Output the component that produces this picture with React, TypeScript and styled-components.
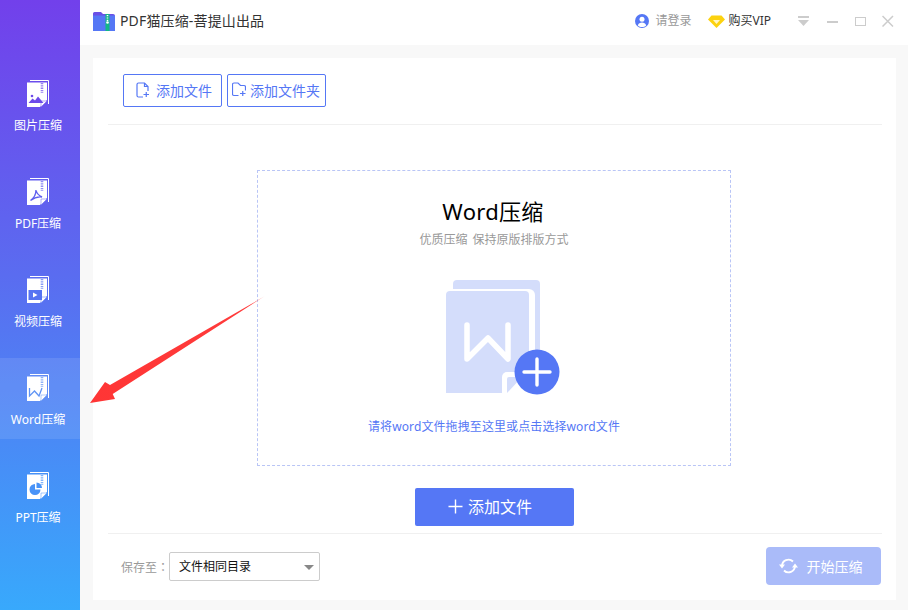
import React from "react";
import styled, { createGlobalStyle } from "styled-components";

const Global = createGlobalStyle`
  html, body { margin: 0; padding: 0; background: #f8f8f8; }
  body { font-family: "Noto Sans", "Noto Sans CJK SC", sans-serif; }
  * { box-sizing: border-box; }
`;

const Shell = styled.div`
  position: relative;
  display: flex;
  width: 908px;
  height: 610px;
  overflow: hidden;
  background: #f8f8f8;
`;

const Sidebar = styled.nav`
  width: 80px;
  flex: none;
  display: flex;
  flex-direction: column;
  gap: 17px;
  padding-top: 64px;
  background: linear-gradient(180deg, #7240eb 0%, #5a6cf0 45%, #38a9fc 100%);
`;

const NavItem = styled.div<{ $active?: boolean }>`
  height: 81px;
  display: flex;
  flex-direction: column;
  align-items: center;
  padding: 16px 4px 0 0;
  background: ${(p) => (p.$active ? "rgba(255,255,255,0.1)" : "transparent")};
`;

const NavLabel = styled.span`
  margin-top: 11px;
  font-size: 12px;
  line-height: 16px;
  color: #fff;
  white-space: nowrap;
`;

const Main = styled.div`
  flex: 1;
  display: flex;
  flex-direction: column;
  min-width: 0;
`;

const Header = styled.header`
  height: 45px;
  flex: none;
  display: flex;
  align-items: center;
  background: #fff;
  padding: 0 14px 4px 13px;
`;

const Title = styled.h1`
  margin: 1px 0 0 5px;
  font-size: 14px;
  line-height: 20px;
  font-weight: 400;
  letter-spacing: 0.15px;
  color: #333;
`;

const HeaderRight = styled.div`
  margin: 1px 0 0 auto;
  display: flex;
  align-items: center;
`;

const HeaderText = styled.span<{ $dark?: boolean }>`
  font-size: 12px;
  line-height: 16px;
  color: ${(p) => (p.$dark ? "#333" : "#999")};
  margin-left: ${(p) => (p.$dark ? "3px" : "6px")};
`;

const DiamondWrap = styled.span`
  display: flex;
  margin-left: 17px;
`;

const WindowControls = styled.div`
  display: flex;
  align-items: center;
  gap: 16px;
  margin-left: 27px;
`;

const Body = styled.div`
  flex: 1;
  padding: 13px 12px 10px 13px;
  min-height: 0;
`;

const Card = styled.main`
  height: 100%;
  display: flex;
  flex-direction: column;
  background: #fff;
  padding: 0 14px 0 15px;
`;

const Toolbar = styled.div`
  height: 67px;
  flex: none;
  display: flex;
  gap: 5px;
  padding: 16px 0 0 15px;
  border-bottom: 1px solid #f0f0f0;
`;

const OutlineButton = styled.button<{ $inset: number; $gap: number }>`
  width: 99px;
  height: 33px;
  display: flex;
  align-items: center;
  gap: ${(p) => p.$gap}px;
  padding: 0 0 2px ${(p) => p.$inset}px;
  border: 1px solid #5577f5;
  border-radius: 2px;
  background: #fff;
  color: #5577f5;
  font: inherit;
  font-size: 14px;
  white-space: nowrap;
`;

const DropZone = styled.section`
  align-self: center;
  width: 474px;
  height: 296px;
  margin: 45px 2px 0 0;
  display: flex;
  flex-direction: column;
  align-items: center;
  padding-top: 24px;
  border: 1px dashed #b9c5f6;
`;

const DropTitle = styled.h2`
  margin: 0 2px 0 0;
  font-size: 22px;
  line-height: 32px;
  font-weight: 400;
  letter-spacing: 0.3px;
  color: #000;
`;

const DropSub = styled.p`
  margin: 4px 0 0;
  font-size: 12px;
  line-height: 18px;
  word-spacing: 2px;
  color: #999;
`;

const Illustration = styled.svg`
  margin-top: 31px;
  margin-left: 17px;
  display: block;
`;

const DropHint = styled.p`
  margin: 23px 0 0;
  font-size: 12px;
  line-height: 18px;
  letter-spacing: 0.1px;
  color: #5577f5;
`;

const AddButton = styled.button`
  align-self: center;
  width: 159px;
  height: 38px;
  flex: none;
  margin: 22px 2px 0 0;
  display: flex;
  align-items: center;
  justify-content: center;
  gap: 5px;
  padding: 0 8px 2px 0;
  border: 0;
  border-radius: 2px;
  background: #5577f5;
  color: #fff;
  font: inherit;
  font-size: 16px;
`;

const Footer = styled.footer`
  flex: 1;
  margin-top: 7px;
  display: flex;
  align-items: center;
  padding: 0 1px 2px 13px;
  border-top: 1px solid #f0f0f0;
`;

const SaveLabel = styled.span`
  font-size: 12px;
  color: #999;
  width: 48px;
  white-space: nowrap;
  font-family: "Noto Sans CJK TC", sans-serif;
`;

const SelectBox = styled.div`
  width: 151px;
  height: 29px;
  display: flex;
  align-items: center;
  justify-content: space-between;
  padding: 0 4px 0 9px;
  border: 1px solid #ccc;
  border-radius: 2px;
  font-size: 12px;
  color: #111;
`;

const Caret = styled.span`
  width: 0;
  height: 0;
  margin-top: 2px;
  margin-right: 1px;
  border-left: 5px solid transparent;
  border-right: 5px solid transparent;
  border-top: 5px solid #888;
`;

const StartButton = styled.button`
  margin-left: auto;
  width: 115px;
  height: 38px;
  display: flex;
  align-items: center;
  justify-content: center;
  gap: 9px;
  padding: 0 6px 0 0;
  border: 0;
  border-radius: 4px;
  background: #aabbf9;
  color: #fff;
  font: inherit;
  font-size: 14px;
`;

const ArrowOverlay = styled.svg`
  position: absolute;
  left: 0;
  top: 0;
  pointer-events: none;
`;

const DocIcon = ({ color, children }: { color: string; children: React.ReactNode }) => (
  <svg width="22" height="27" viewBox="0 0 22 27">
    <path d="M3 0.5H21.5V24" fill="none" stroke="#fff" strokeWidth="1" />
    <path d="M1 2.5H20V20L13 27H0V2.5Z" fill="#fff" />
    <path d="M14 21H20L14 27Z" fill="#fff" stroke={color} strokeWidth="0.5" />
    <path d="M15 3V13" stroke={color} strokeWidth="2.6" strokeDasharray="1.3 1" opacity="0.7" />
    <g fill={color}>{children}</g>
  </svg>
);

const navItems = [
  {
    label: "图片压缩",
    color: "#6c4aea",
    glyph: (
      <>
        <circle cx="5" cy="16" r="1.3" />
        <path d="M1.5 23L5.5 18.5L8 20.5L11 16.5L16.5 23Z" />
      </>
    ),
  },
  {
    label: "PDF压缩",
    color: "#6060ef",
    glyph: (
      <path
        d="M9 12C9.5 15 11 17 15 19C12 18.5 8 19 3.5 22.5C7 20 9 15.5 9 12Z"
        fill="none"
        stroke="#6060ef"
        strokeWidth="1.4"
      />
    ),
  },
  {
    label: "视频压缩",
    color: "#5674f2",
    glyph: <path fillRule="evenodd" d="M1.5 14H15V24H1.5ZM6 16.5V21.5L10.5 19Z" />,
  },
  {
    label: "Word压缩",
    color: "#6094f4",
    active: true,
    glyph: (
      <path d="M2.5 14V22L7.5 17L12 22L15 14" fill="none" stroke="#6094f4" strokeWidth="1.3" />
    ),
  },
  {
    label: "PPT压缩",
    color: "#4993f8",
    glyph: (
      <>
        <path d="M8 12A5.5 5.5 0 1 0 13.5 17.5H8Z" />
        <path d="M9.5 10.5A5.5 5.5 0 0 1 15 16H9.5Z" />
      </>
    ),
  },
];

const FilePlusIcon = () => (
  <svg width="14" height="16" viewBox="0 0 14 16" fill="none" stroke="#5577f5" strokeWidth="1.2">
    <path d="M7 15H2.5A1.5 1.5 0 0 1 1 13.5V2.5A1.5 1.5 0 0 1 2.5 1H8.5L12 4.5V9" />
    <path d="M8.5 1V4.5H12" />
    <path d="M7.5 12.5H13M10.25 10V15" />
  </svg>
);

const FolderPlusIcon = () => (
  <svg width="14" height="15" viewBox="0 0 14 15" fill="none" stroke="#5577f5" strokeWidth="1.2">
    <path d="M6.5 13.5H2A1.5 1.5 0 0 1 0.5 12V2.5A1.5 1.5 0 0 1 2 1H6L8.5 3.5H12A1.5 1.5 0 0 1 13.5 5V8.5" />
    <path d="M8 11.5H13.5M10.75 9V14" />
  </svg>
);

export default function App() {
  return (
    <Shell>
      <Global />
      <Sidebar>
        {navItems.map((n) => (
          <NavItem key={n.label} $active={n.active}>
            <DocIcon color={n.color}>{n.glyph}</DocIcon>
            <NavLabel>{n.label}</NavLabel>
          </NavItem>
        ))}
      </Sidebar>
      <Main>
        <Header>
          <svg width="22" height="20" viewBox="0 0 22 20">
            <path d="M0 2.5A1.5 1.5 0 0 1 1.5 1H8L10 3H20A2 2 0 0 1 22 5V8H0Z" fill="#6a4fe6" />
            <path d="M0 4.5H22V20H0Z" fill="#5577f5" />
            <rect x="12.5" y="3" width="4" height="17" fill="#12b886" />
            <path d="M14.5 4V11" stroke="#fff" strokeWidth="1.6" strokeDasharray="1.2 1.2" />
            <circle cx="14.5" cy="11.5" r="1.3" fill="#fff" />
          </svg>
          <Title>PDF猫压缩-菩提山出品</Title>
          <HeaderRight>
            <svg width="14" height="14" viewBox="0 0 14 14">
              <circle cx="7" cy="7" r="7" fill="#5577f5" />
              <circle cx="7" cy="5.2" r="2.5" fill="#fff" />
              <path d="M2.8 11.5C3.5 9.2 5 8.5 7 8.5S10.5 9.2 11.2 11.5C10 12.6 8.6 13 7 13S4 12.6 2.8 11.5Z" fill="#fff" />
            </svg>
            <HeaderText>请登录</HeaderText>
            <DiamondWrap>
              <svg width="17" height="13" viewBox="0 0 17 13">
                <path d="M3.5 0.5H13.5L17 4.5L8.5 13L0 4.5Z" fill="#fcd20f" />
                <path d="M5 5H12L8.5 9Z" fill="#fff6c4" />
              </svg>
            </DiamondWrap>
            <HeaderText $dark>购买VIP</HeaderText>
            <WindowControls>
              <svg width="13" height="11" viewBox="0 0 13 11">
                <rect x="0" y="0" width="11" height="2" fill="#ccc" />
                <path d="M0 4H11L5.5 10Z" fill="#ccc" />
              </svg>
              <svg width="12" height="11" viewBox="0 0 12 11">
                <rect x="0" y="5" width="11" height="2" fill="#ccc" />
              </svg>
              <svg width="11" height="11" viewBox="0 0 11 11" fill="none">
                <rect x="0.5" y="1.5" width="10" height="8" stroke="#ccc" />
              </svg>
              <svg width="12" height="12" viewBox="0 0 12 12">
                <path d="M0.5 1L11 11.5M11 1L0.5 11.5" stroke="#ccc" strokeWidth="1.5" />
              </svg>
            </WindowControls>
          </HeaderRight>
        </Header>
        <Body>
          <Card>
            <Toolbar>
              <OutlineButton $inset={12} $gap={6}>
                <FilePlusIcon />
                添加文件
              </OutlineButton>
              <OutlineButton $inset={4} $gap={4}>
                <FolderPlusIcon />
                添加文件夹
              </OutlineButton>
            </Toolbar>
            <DropZone>
              <DropTitle>Word压缩</DropTitle>
              <DropSub>优质压缩 保持原版排版方式</DropSub>
              <Illustration width="114" height="115" viewBox="0 0 114 115">
                <path d="M7 4A4 4 0 0 1 11 0H90A4 4 0 0 1 94 4V85H7Z" fill="#d4ddfb" />
                <path d="M-2 15A6 6 0 0 1 4 9H83A6 6 0 0 1 89 15V90H0Z" fill="#fff" />
                <path d="M0 15A4 4 0 0 1 4 11H79A4 4 0 0 1 83 15V85L57 113H0Z" fill="#d4ddfb" />
                <path d="M21 45V79L42 58L62 79V45" fill="none" stroke="#fff" strokeWidth="5.5" strokeLinecap="round" strokeLinejoin="round" />
                <path d="M56 114V97A5 5 0 0 1 61 92H85L62 114Z" fill="#fff" />
                <path d="M61 113V99A2 2 0 0 1 63 97H76Z" fill="#d4ddfb" />
                <circle cx="91" cy="92" r="22.5" fill="#5577f5" />
                <path d="M78 92H104M91 79V105" stroke="#fff" strokeWidth="3.4" strokeLinecap="round" />
              </Illustration>
              <DropHint>请将word文件拖拽至这里或点击选择word文件</DropHint>
            </DropZone>
            <AddButton>
              <svg width="15" height="15" viewBox="0 0 15 15">
                <path d="M0.5 7.5H14.5M7.5 0.5V14.5" stroke="#fff" strokeWidth="1.4" />
              </svg>
              添加文件
            </AddButton>
            <Footer>
              <SaveLabel>保存至：</SaveLabel>
              <SelectBox>
                文件相同目录
                <Caret />
              </SelectBox>
              <StartButton>
                <svg width="19" height="18" viewBox="0 0 19 18" fill="none" stroke="#fff" strokeWidth="1.9">
                  <path d="M3 9A6.5 6.5 0 0 1 14 4.5" />
                  <path d="M16 9A6.5 6.5 0 0 1 5 13.5" />
                  <path d="M0 7.5H6L3 11.5Z" fill="#fff" stroke="none" />
                  <path d="M13 10.5H19L16 6.5Z" fill="#fff" stroke="none" />
                </svg>
                开始压缩
              </StartButton>
            </Footer>
          </Card>
        </Body>
      </Main>
      <ArrowOverlay width="908" height="610" viewBox="0 0 908 610">
        <defs>
          <linearGradient id="arrowFade" x1="265" y1="296" x2="90" y2="403" gradientUnits="userSpaceOnUse">
            <stop offset="0" stopColor="#ff3b3b" stopOpacity="0.2" />
            <stop offset="0.08" stopColor="#ff3b3b" />
            <stop offset="1" stopColor="#ff3535" />
          </linearGradient>
        </defs>
        <path d="M265 296L110 385L105 382L90 403L115 399L112.7 394Z" fill="url(#arrowFade)" />
      </ArrowOverlay>
    </Shell>
  );
}
